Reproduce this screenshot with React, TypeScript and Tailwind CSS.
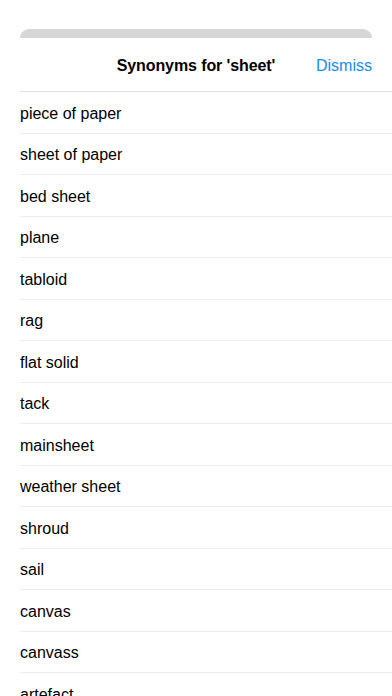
const words = [
  "piece of paper",
  "sheet of paper",
  "bed sheet",
  "plane",
  "tabloid",
  "rag",
  "flat solid",
  "tack",
  "mainsheet",
  "weather sheet",
  "shroud",
  "sail",
  "canvas",
  "canvass",
  "artefact",
  "cover",
];

export default function App() {
  return (
    <main
      className="h-[696px] overflow-hidden bg-white text-black"
      style={{ fontFamily: "'Liberation Sans', Arial, sans-serif" }}
    >
      {/* sheet peeking behind */}
      <div className="pt-[29px] px-5">
        <div className="h-[9px] rounded-t-[9px] bg-[#d6d6d6]" />
      </div>

      {/* header */}
      <div className="relative flex items-center justify-center h-[53px] pt-[2px]">
        <h1 className="text-[16px] font-bold tracking-[-0.1px]">Synonyms for 'sheet'</h1>
        <button className="absolute right-5 text-[16px] text-[#1a8cf0]">Dismiss</button>
      </div>
      <div className="ml-5 border-b border-[#e3e3e3]" />

      {/* list */}
      <ul className="ml-5">
        {words.map((w) => (
          <li
            key={w}
            className="h-[41.5px] flex items-center pt-[3px] border-b border-[#ececec] text-[16px]"
          >
            {w}
          </li>
        ))}
      </ul>
    </main>
  );
}
